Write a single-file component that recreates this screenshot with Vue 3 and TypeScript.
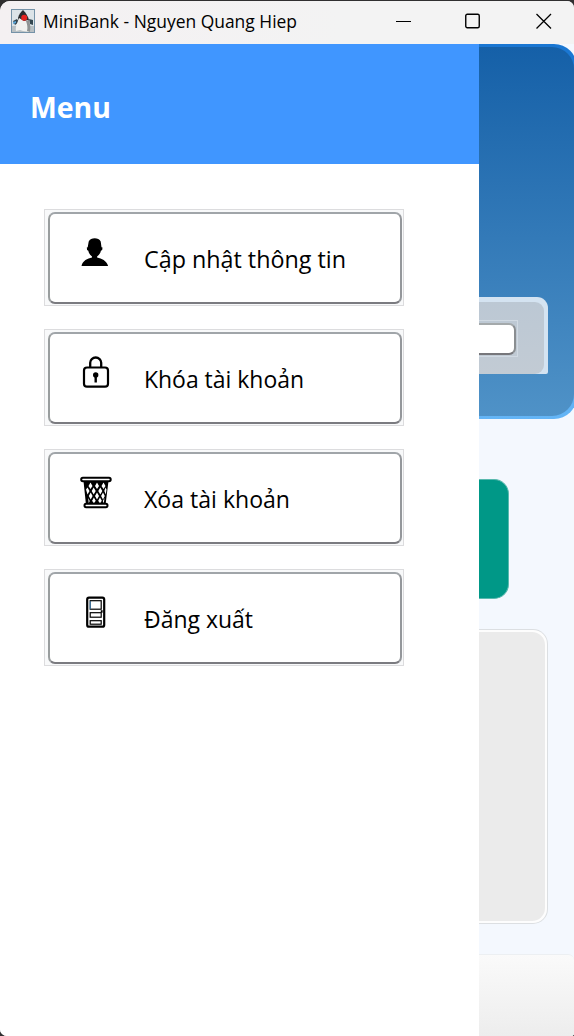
<script setup lang="ts">
interface MenuItem {
  id: 'user' | 'lock' | 'bin' | 'door'
  label: string
  width: number
}

const title = 'MiniBank - Nguyen Quang Hiep'
const items: MenuItem[] = [
  { id: 'user', label: 'Cập nhật thông tin', width: 202 },
  { id: 'lock', label: 'Khóa tài khoản', width: 160 },
  { id: 'bin', label: 'Xóa tài khoản', width: 146 },
  { id: 'door', label: 'Đăng xuất', width: 109 },
]
</script>

<template>
  <div class="desktop">
    <div class="window">
      <header class="titlebar">
        <svg class="app-icon" viewBox="0 0 24 24">
          <rect x=".5" y=".5" width="23" height="23" fill="#dce3e8" stroke="#7592a8" />
          <path d="M1 17h22v6H1z" fill="#b9c0c4" />
          <path d="M2 12l4-2 2 3-4 3zM18 10l4 1v5l-3-1z" fill="#344650" />
          <path d="M2 13l3-1v2l-3 1z" fill="#5aa5d8" />
          <path d="M12 1c3 3 5 6 6 10l-1 3H8L7 9c1-4 3-6 5-8z" fill="#292c30" />
          <path d="M8 9c-1 4-4 8-3 13l4-1 3 1 7 1c1-5-1-9-2-12l-4 1z" fill="#f1f1ef" />
          <path d="M18 11c1 4 2 8 1 12l-3-1c1-4 0-7-1-10z" fill="#8f9393" />
          <circle cx="13.2" cy="8.7" r="3" fill="#e52220" />
        </svg>
        <svg class="title" width="255" height="26">
          <text x="0" y="19.5" textLength="254" lengthAdjust="spacingAndGlyphs">{{ title }}</text>
        </svg>
        <div class="controls">
          <svg viewBox="0 0 16 16"><path d="M0 8.5h15" stroke="#000" fill="none" /></svg>
          <svg viewBox="0 0 16 16"><rect x=".75" y="1.25" width="13.5" height="13.5" rx="1.5" fill="none" stroke="#000" stroke-width="1.4" /></svg>
          <svg viewBox="0 0 16 16"><path d="M.5 1l14.5 14.5M15 1L.5 15.5" fill="none" stroke="#000" stroke-width="1.3" /></svg>
        </div>
      </header>

      <main class="content">
        <aside class="drawer">
          <div class="drawer-head">
            <svg width="120" height="44"><text x="0" y="30" textLength="81" lengthAdjust="spacingAndGlyphs">Menu</text></svg>
          </div>
          <nav class="menu">
            <div v-for="item in items" :key="item.id" class="slot">
              <button class="item">
                <svg v-if="item.id === 'user'" class="icon" viewBox="0 0 32 36">
                  <path transform="translate(-.8 0)" d="M9.500 5.500C10.500 3 13 2.200 15.500 2.200s5 .8 6 3.300l.8 5.700 1 .3-.3 2.500-1.300.8c-.5 2.700-2 4.500-3.800 5.600v1.200c4.600 1 9.400 3 11 8.400H2.300C3.500 24.600 8.300 22.600 12.800 21.600v-1.200c-1.800-1.100-3.100-2.900-3.700-5.600L7.900 14l-.3-2.500.9-.3z" />
                </svg>
                <svg v-else-if="item.id === 'lock'" class="icon" viewBox="0 0 32 36">
                  <path d="M10.200 11V6.800a5.500 5.300 0 0 1 11 0V11" fill="none" stroke="#000" stroke-width="2.3" />
                  <rect x="4" y="11.5" width="24" height="19.2" rx="3" fill="#fff" stroke="#000" stroke-width="2.200" />
                  <circle cx="15.7" cy="19" r="2.700" /><path d="M14.500 20h2.400v6.500h-2.400z" />
                </svg>
                <svg v-else-if="item.id === 'bin'" class="icon" viewBox="0 0 32 36">
                  <path d="M3.500 5l2.500 24h19.500l3-24z" fill="#000" />
                  <g fill="#fff">
                    <path d="M10.500 6.500l2 3.500-2 3-2-3zM17 6.500l2 3.500-2 3-2-3zM23.500 6.500l2 3.500-2 3-2-3z" />
                    <path d="M7.500 11.500l2 3.500-2 3.500-1.500-5zM13.700 11.500l2 3.500-2 3.500-2-3.500zM20.300 11.500l2 3.500-2 3.500-2-3.500zM25.500 11.500l1 2-.7 5-1.500-3.500z" />
                    <path d="M10.700 16.500l1.900 3.500-1.900 3.500-1.900-3.500zM17 16.500l2 3.500-2 3.500-2-3.500zM23 16.500l1.800 3.500-1.800 3.500-1.900-3.500z" />
                    <path d="M8.200 22l1.500 3-1 2.500zM13.900 21.500l1.800 3.300-1.800 2.700-1.800-2.700zM20 21.500l1.800 3.300-1.800 2.700-1.800-2.700zM24.500 22l-.7 5.500-1-2.500z" />
                  </g>
                  <rect x="1.200" y="1.800" width="29.500" height="3.400" rx="1.700" fill="#fff" stroke="#000" stroke-width="2" />
                  <rect x="4.500" y="27.800" width="23" height="3.400" rx="1.600" fill="#fff" stroke="#000" stroke-width="2" />
                </svg>
                <svg v-else class="icon" viewBox="0 0 32 36">
                  <g transform="translate(-.3 -.8)">
                    <rect x="7.500" y="2.500" width="17" height="29" rx="1.800" fill="#fff" stroke="#000" stroke-width="2.200" />
                    <g fill="none" stroke="#000" stroke-width="1.200">
                      <rect x="10.500" y="5.500" width="11" height="8.500" /><rect x="10.500" y="17.500" width="11" height="4.500" /><rect x="10.500" y="25.500" width="11" height="3.500" />
                    </g>
                    <path d="M22 15v2.500" stroke="#000" stroke-width="1.900" />
                    <path d="M10.500 6v8" stroke="#4ba3e8" stroke-width=".8" />
                  </g>
                </svg>
                <svg class="label" width="240" height="40">
                  <text x="0" y="28" :textLength="item.width" lengthAdjust="spacingAndGlyphs">{{ item.label }}</text>
                </svg>
              </button>
            </div>
          </nav>
        </aside>

        <section class="peek">
          <div class="hero">
            <div class="hero-fill">
              <div class="balance">
                <div class="balance-fill">
                  <div class="field-frame"><div class="field"></div></div>
                </div>
              </div>
            </div>
          </div>
          <div class="action"></div>
          <div class="history"><div></div></div>
          <div class="tabbar"></div>
        </section>
      </main>
    </div>
  </div>
</template>

<style>
body { background: #302f30; }
</style>

<style scoped>
.desktop { height: 1036px; padding-top: 1px; box-sizing: border-box; background: #302f30; }
.window {
  height: 1035px; overflow: hidden; border-radius: 10px 7px 3px 7px;
  background: #fff; font-family: "Noto Sans", "Open Sans", sans-serif;
}
.titlebar {
  height: 43px; box-sizing: border-box; display: flex; align-items: center;
  padding: 0 0 3px 11px; background: linear-gradient(90deg, #f4f0f2, #f3f3f3 60%);
}
.app-icon { width: 24px; height: 24px; }
.title { margin-left: 8px; font-size: 17.5px; }
.title text { font-family: "Open Sans", sans-serif; }
.controls { display: flex; gap: 54px; margin-left: 98px; }
.controls svg { width: 16px; height: 16px; flex: none; }
.controls svg:nth-child(2) { margin-left: -1px; }
.controls svg:nth-child(3) { margin-left: 1px; }
.content { height: 992px; display: grid; grid-template-columns: 479px 95px; }
.drawer { background: #fff; }
.drawer-head {
  height: 120px; box-sizing: border-box; padding: 44px 30px;
  background: #4096ff; font-weight: 700; font-size: 29px;
}
.drawer-head svg { display: block; }
.drawer-head text { fill: #fff; font-family: "Open Sans", sans-serif; }
.menu { display: grid; gap: 23px; padding: 45px 0 0 44px; }
.slot {
  width: 360px; height: 97px; box-sizing: border-box; padding: 2px 1px 1px 3px;
  border: 1px solid #dcdcde; background: #f8f9fa;
}
.item {
  width: 354px; height: 92px; margin: 0; box-sizing: border-box; display: flex; align-items: flex-start;
  padding: 22px 0 0 30px; border: 2px solid; border-color: #a0a5a9 #94979b #7b7b80 #999d9e;
  border-radius: 7px; background: #fff;
}
.icon { width: 32px; height: 36px; flex: none; }
.label { margin: 4px 0 0 32px; font-size: 24px; overflow: visible; flex: none; }
.label text { font-family: "Open Sans", "Noto Sans", sans-serif; }
.peek { overflow: hidden; background: #f4f8fe; }
.hero {
  width: 98px; height: 375px; box-sizing: border-box; padding: 3px 3px 3px 0;
  border-radius: 0 23px 23px 0; background: linear-gradient(#1976d2, #64b5f6);
}
.hero-fill {
  height: 100%; box-sizing: border-box; padding-top: 250px; border-radius: 0 22px 22px 0;
  background: linear-gradient(#1560a8, #4f92c7);
}
.balance {
  width: 69px; height: 77px; box-sizing: border-box; padding: 5px 4px 0 0;
  border-radius: 0 11px 2px 0; background: #d4e3f1;
}
.balance-fill {
  height: 72px; box-sizing: border-box; padding-top: 18px;
  border-radius: 0 9px 9px 0; background: linear-gradient(#bcc8d4, #c2cbd4);
}
.field-frame {
  width: 39px; height: 37px; box-sizing: border-box; padding: 2px 2px 1px 0;
  border: 1px solid #d1dae3; border-left: 0;
}
.field {
  width: 37px; height: 32px; box-sizing: border-box; border: 2px solid; border-left: 0;
  border-color: #a4a9ab #8a8e91 #77777b; border-radius: 0 7px 7px 0; background: #fff;
}
.action {
  width: 30px; height: 120px; margin-top: 60px; box-sizing: border-box;
  border: 1px solid #59b9ae; border-left: 0; border-radius: 0 15px 15px 0; background: #009887;
}
.history {
  width: 69px; height: 295px; margin-top: 30px; box-sizing: border-box; padding: 2px 2px 2px 0;
  border: 1px solid #dcdfe2; border-left: 0; border-radius: 0 15px 15px 0; background: #fdfdfd;
}
.history div { height: 100%; border-radius: 0 13px 13px 0; background: #ebebeb; }
.tabbar {
  height: 82px; margin-top: 30px; box-sizing: border-box; border-top: 1px solid #eceff2;
  border-radius: 0 6px 0 0; background: linear-gradient(#fafafa, #ededed);
}
</style>
